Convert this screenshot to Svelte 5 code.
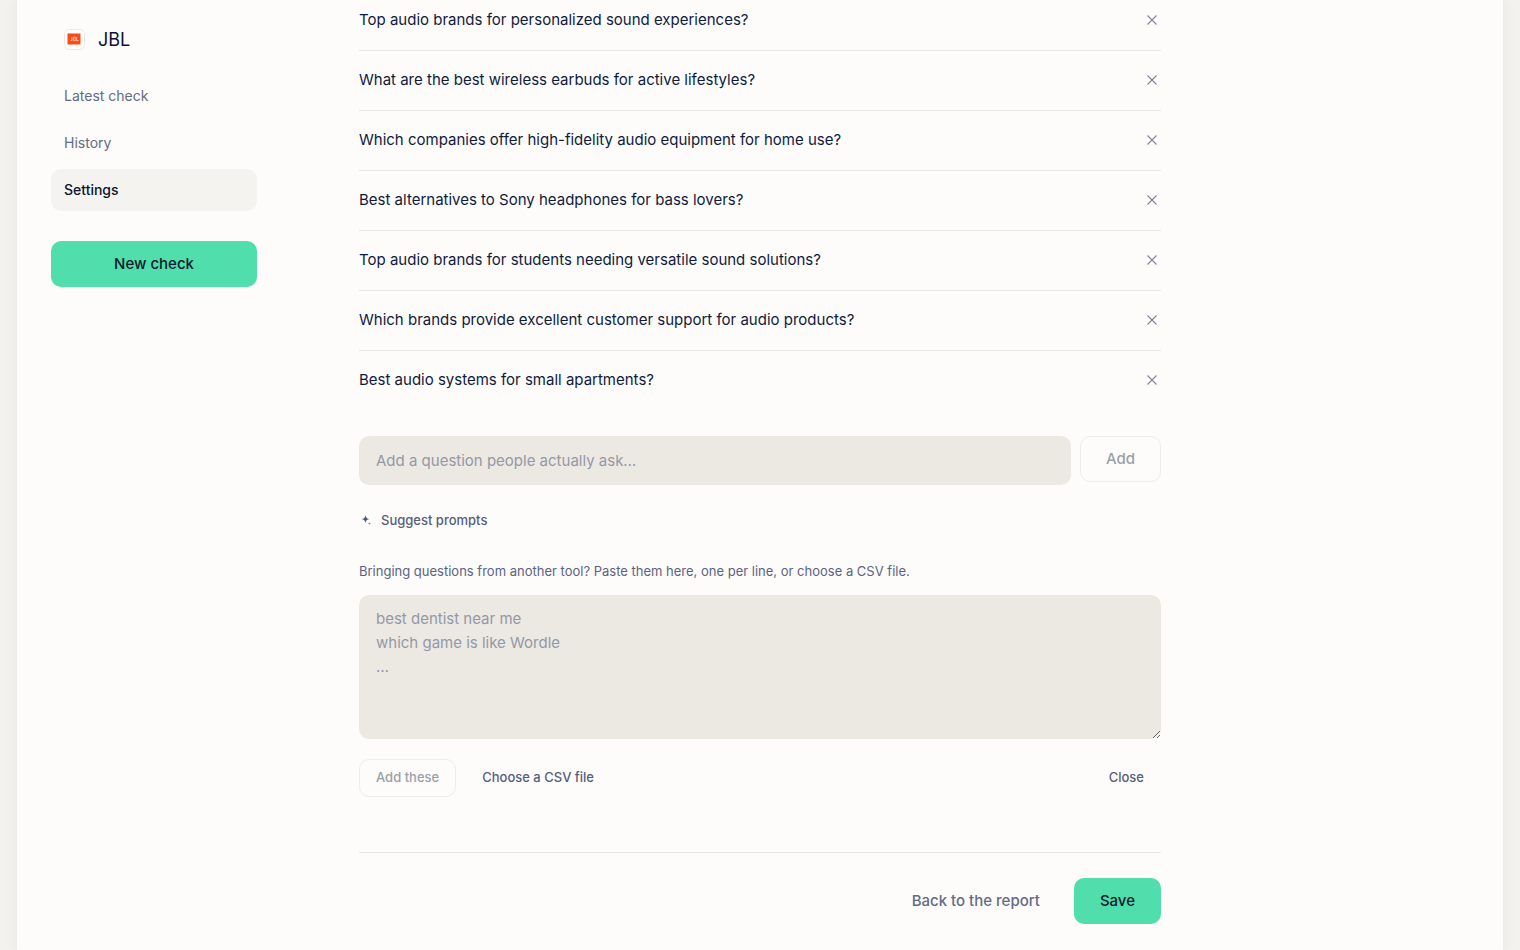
<script>
  let questions = $state([
    'Top audio brands for personalized sound experiences?',
    'What are the best wireless earbuds for active lifestyles?',
    'Which companies offer high-fidelity audio equipment for home use?',
    'Best alternatives to Sony headphones for bass lovers?',
    'Top audio brands for students needing versatile sound solutions?',
    'Which brands provide excellent customer support for audio products?',
    'Best audio systems for small apartments?'
  ]);
  let draft = $state('');
  let bulk = $state('');
  let importing = $state(true);

  function add() {
    if (draft.trim()) questions.push(draft.trim());
    draft = '';
  }
  function addBulk() {
    questions.push(...bulk.split('\n').map((s) => s.trim()).filter(Boolean));
    bulk = '';
  }
</script>

<div class="sheet">
  <aside>
    <div class="brand">
      <svg width="22" height="22" viewBox="0 0 22 22" aria-hidden="true">
        <rect x="0.5" y="0.5" width="20" height="20" rx="5" fill="#fff" stroke="#ebe9e4" />
        <rect x="3.5" y="4.5" width="13" height="11" fill="#fb4a14" />
        <path d="M7.9 8.2v3.4H6.6M9.6 8v3.6h1.3a.9.9 0 0 0 0-1.8.9.9 0 0 0 0-1.8zM12.6 8v3.6h1.8" fill="none" stroke="#ffc3ac" stroke-width="1" />
      </svg>
      <span>JBL</span>
    </div>
    <nav>
      <a href="#latest">Latest check</a>
      <a href="#history">History</a>
      <a href="#settings" class="current" aria-current="page">Settings</a>
    </nav>
    <button class="primary wide" type="button">New check</button>
  </aside>

  <main>
    <ul>
      {#each questions as question, i}
        <li>
          <span>{question}</span>
          <button class="remove" type="button" aria-label="Remove" onclick={() => questions.splice(i, 1)}>
            <svg width="10" height="10" viewBox="0 0 10 10" aria-hidden="true">
              <path d="M0.5 0.5l9 9M9.5 0.5l-9 9" stroke="#7f8597" stroke-width="1.1" fill="none" />
            </svg>
          </button>
        </li>
      {/each}
    </ul>

    <div class="add-row">
      <input type="text" aria-label="New question" placeholder="Add a question people actually ask…" bind:value={draft} />
      <button class="outline" type="button" disabled={!draft.trim()} onclick={add}>Add</button>
    </div>

    <button class="suggest" type="button">
      <svg width="14" height="14" viewBox="0 0 14 14" aria-hidden="true">
        <path d="M6.5 2.2c.5 2.5 1.3 3.4 3.9 3.9-2.6.5-3.4 1.3-3.9 3.9-.5-2.6-1.3-3.4-3.9-3.9 2.6-.5 3.4-1.4 3.9-3.9z" fill="#4b5473" />
        <path d="M10.5 9c.2 1 .5 1.3 1.5 1.5-1 .2-1.3.5-1.5 1.5-.2-1-.5-1.3-1.5-1.5 1-.2 1.3-.5 1.5-1.5z" fill="#7c8398" />
      </svg>
      <span>Suggest prompts</span>
    </button>

    {#if importing}
      <label for="bulk">Bringing questions from another tool? Paste them here, one per line, or choose a CSV file.</label>
      <textarea id="bulk" placeholder={'best dentist near me\nwhich game is like Wordle\n…'} bind:value={bulk}></textarea>
      <div class="import-row">
        <button class="outline small" type="button" disabled={!bulk.trim()} onclick={addBulk}>Add these</button>
        <button class="plain" type="button">Choose a CSV file</button>
        <button class="plain close" type="button" onclick={() => (importing = false)}>Close</button>
      </div>
    {/if}

    <footer>
      <a href="#report">Back to the report</a>
      <button class="primary" type="button">Save</button>
    </footer>
  </main>
</div>

<style>
  :global(body) {
    background: #f3f2ee;
    overflow: hidden;
  }
  .sheet,
  .sheet button,
  .sheet input,
  .sheet textarea {
    font-family: Inter, 'Liberation Sans', sans-serif;
  }
  .sheet {
    box-sizing: border-box;
    min-height: 100vh;
    margin: 0 17px;
    padding: 0 34px;
    display: grid;
    grid-template-columns: 206px minmax(0, 1fr) 206px;
    background: #fdfcfa;
    box-shadow: 0 0 14px rgba(60, 50, 20, 0.06);
    color: #0f1b3d;
    font-size: 15px;
    line-height: 24px;
  }
  button {
    margin: 0;
    padding: 0;
    border: 0;
    background: none;
    color: inherit;
    font-size: 15px;
    line-height: 24px;
    cursor: pointer;
  }
  a {
    color: #636b84;
    text-decoration: none;
  }

  .brand {
    display: flex;
    align-items: center;
    gap: 12px;
    padding: 28px 13px 0;
    font-size: 18px;
    color: #0a1330;
  }
  nav {
    display: grid;
    gap: 5px;
    margin-top: 23px;
  }
  nav a {
    padding: 9px 13px;
    border-radius: 10px;
    font-size: 14px;
  }
  nav .current {
    background: #f4f3ef;
    color: #0a1330;
    font-weight: 500;
  }
  .primary {
    height: 46px;
    padding: 0 26px;
    border-radius: 10px;
    background: #50deac;
    color: #0a1a2e;
    font-weight: 500;
  }
  .wide {
    width: 100%;
    margin-top: 30px;
  }

  main {
    width: 100%;
    max-width: 802px;
    margin: 0 auto;
  }
  ul {
    margin: -9px 0 25px;
    padding: 0;
    list-style: none;
  }
  li {
    box-sizing: border-box;
    min-height: 60px;
    padding-bottom: 2px;
    display: flex;
    align-items: center;
    justify-content: space-between;
    border-bottom: 1px solid #eae8e4;
  }
  li:last-child {
    border-bottom: 0;
  }
  .remove {
    display: grid;
    padding: 4px;
  }

  .add-row {
    display: flex;
    align-items: flex-start;
    gap: 9px;
  }
  input,
  textarea {
    box-sizing: border-box;
    margin: 0;
    border: 0;
    border-radius: 10px;
    background: #ece9e3;
    color: #0f1b3d;
    font-size: 15px;
    line-height: 24px;
  }
  input {
    flex: 1;
    min-width: 0;
    height: 49px;
    padding: 0 17px;
  }
  ::placeholder {
    color: #9498a6;
    opacity: 1;
  }
  .outline {
    box-sizing: border-box;
    height: 46px;
    padding: 0 25px;
    border: 1px solid #efede9;
    border-radius: 10px;
    color: #9b9fa8;
    font-weight: 500;
  }
  .suggest,
  .plain,
  .small {
    font-size: 13px;
    line-height: 20px;
    font-weight: 500;
  }
  .small {
    height: 38px;
    padding: 0 16px 2px;
  }
  .suggest {
    display: flex;
    align-items: center;
    gap: 8px;
    margin-top: 25px;
    color: #565e7c;
  }
  label {
    display: block;
    margin-top: 31px;
    font-size: 13px;
    line-height: 20px;
    color: #5b6380;
  }
  textarea {
    display: block;
    width: 100%;
    height: 144px;
    margin-top: 14px;
    padding: 12px 17px;
    resize: vertical;
  }
  .import-row {
    display: flex;
    align-items: center;
    gap: 26px;
    margin-top: 20px;
  }
  .plain {
    padding-bottom: 2px;
    color: #565e7c;
  }
  .close {
    margin: 0 17px 0 auto;
  }
  footer {
    display: flex;
    align-items: center;
    justify-content: flex-end;
    gap: 34px;
    margin-top: 55px;
    padding: 25px 0;
    border-top: 1px solid #eae8e4;
  }
  footer a {
    font-weight: 500;
  }
</style>
